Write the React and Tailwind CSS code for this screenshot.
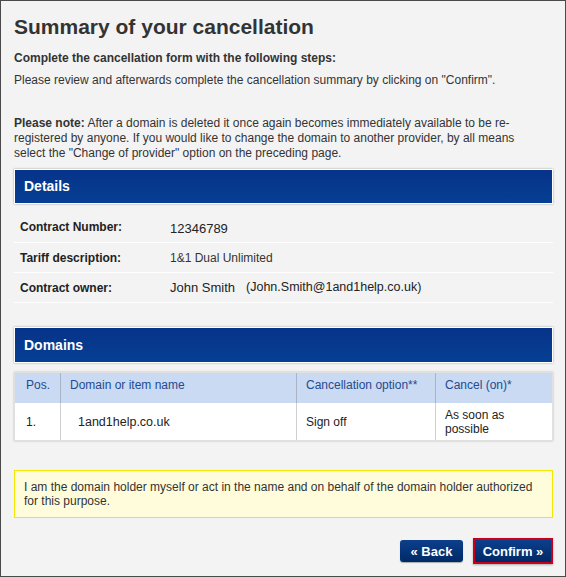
export default function App() {
  return (
    <div className="w-[566px] h-[577px] border border-[#4a4a4a] bg-[#f3f3f3] pl-[13px] pr-[12px] text-[12px] text-[#333] font-['Liberation_Sans',Arial,sans-serif]">
      <h1 className="pt-[13px] text-[21px] leading-[26px] font-bold text-[#333]">Summary of your cancellation</h1>
      <p className="mt-[10px] font-bold leading-[16px]">Complete the cancellation form with the following steps:</p>
      <p className="mt-[6px] leading-[16px]">Please review and afterwards complete the cancellation summary by clicking on "Confirm".</p>
      <p className="mt-[28px] pr-[24px] leading-[15px]">
        <b>Please note:</b> After a domain is deleted it once again becomes immediately available to be re-registered by anyone. If you would like to change the domain to another provider, by all means select the "Change of provider" option on the preceding page.
      </p>

      <div className="mt-[8px] h-[35px] border border-white bg-gradient-to-b from-[#07338a] to-[#053f93] shadow-[0_0_2px_rgba(0,0,0,0.35)] flex items-center pl-[9px]">
        <span className="text-white font-bold text-[14px]">Details</span>
      </div>

      <div className="mt-[8px]">
        <div className="h-[31px] border-b border-white flex items-center">
          <span className="w-[156px] pl-[6px] font-bold text-[#222]">Contract Number:</span>
          <span className="text-[13px] text-[#222] mt-[3px]">12346789</span>
        </div>
        <div className="h-[30px] border-b border-white flex items-center">
          <span className="w-[156px] pl-[6px] font-bold text-[#222]">Tariff description:</span>
          <span className="text-[#333]">1&amp;1 Dual Unlimited</span>
        </div>
        <div className="h-[30px] border-b border-white flex items-center">
          <span className="w-[156px] pl-[6px] font-bold text-[#222]">Contract owner:</span>
          <span className="text-[13px] text-[#222]">John Smith</span>
          <span className="ml-[11px] text-[12.5px] text-[#222]">(John.Smith@1and1help.co.uk)</span>
        </div>
      </div>

      <div className="mt-[24px] h-[36px] border border-white bg-gradient-to-b from-[#07338a] to-[#053f93] shadow-[0_0_2px_rgba(0,0,0,0.35)] flex items-center pl-[9px]">
        <span className="text-white font-bold text-[14px]">Domains</span>
      </div>

      <div className="mt-[9px] border border-[#e0e0e0] shadow-[0_0_2px_rgba(0,0,0,0.25)] bg-white">
        <div className="grid grid-cols-[46px_236px_139px_1fr] h-[30px] bg-[#c9daf2] text-[#234b93] leading-[16px]">
          <div className="pl-[11px] pt-[4px] border-r border-[#a9b4c6]">Pos.</div>
          <div className="pl-[9px] pt-[4px] border-r border-[#a9b4c6]">Domain or item name</div>
          <div className="pl-[9px] pt-[4px] border-r border-[#a9b4c6]">Cancellation option**</div>
          <div className="pl-[9px] pt-[4px]">Cancel (on)*</div>
        </div>
        <div className="grid grid-cols-[46px_236px_139px_1fr] h-[37px] text-[#222] leading-[14px]">
          <div className="pl-[11px] flex items-center border-r border-[#d0d0d0]">1.</div>
          <div className="pl-[17px] flex items-center border-r border-[#d0d0d0] text-[12.5px]">1and1help.co.uk</div>
          <div className="pl-[9px] flex items-center border-r border-[#d0d0d0]">Sign off</div>
          <div className="pl-[9px] flex items-center">As soon as<br />possible</div>
        </div>
      </div>

      <div className="mt-[29px] border border-[#f5e800] bg-[#fffcdc] pl-[9px] pr-[8px] pt-[9px] pb-[9px] leading-[14px] text-[#333]">
        I am the domain holder myself or act in the name and on behalf of the domain holder authorized for this purpose.
      </div>

      <div className="mt-[20px] flex justify-end items-center gap-[10px]">
        <button className="h-[22px] w-[63px] rounded-[3px] bg-gradient-to-b from-[#0d3f8c] to-[#012a66] text-white font-bold text-[13px] leading-none shadow-[0_1px_1px_rgba(0,0,0,0.3)]">« Back</button>
        <div className="border-2 border-[#c8001c] shadow-[0_1px_2px_rgba(0,0,0,0.3)]">
          <button className="block h-[22px] w-[76px] bg-gradient-to-b from-[#0d3f8c] to-[#012a66] text-white font-bold text-[13px] leading-none">Confirm »</button>
        </div>
      </div>
    </div>
  );
}
